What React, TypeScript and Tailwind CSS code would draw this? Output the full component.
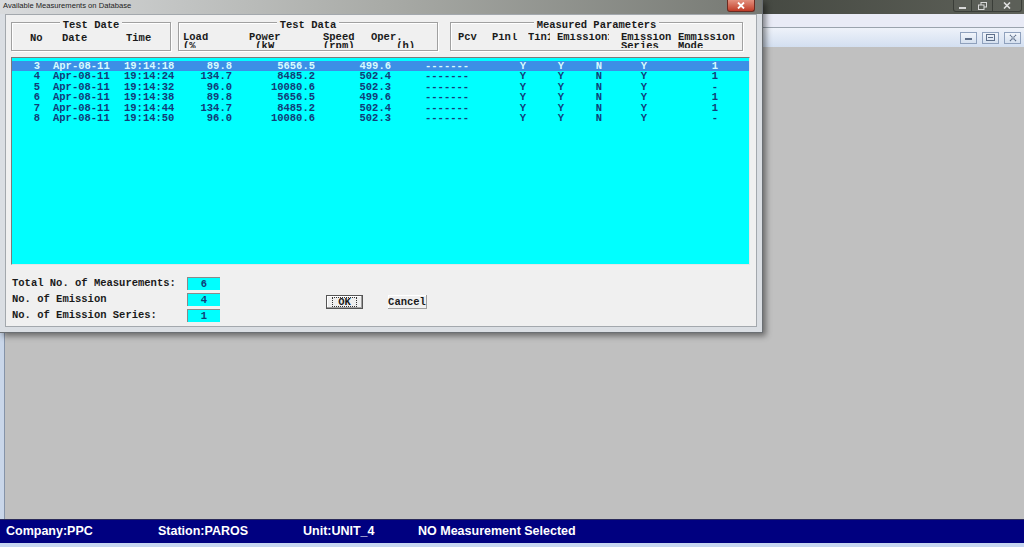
import {useState} from "react";

type Row = {
    no: number;
    date: string;
    time: string;
    load: string;
    power: string;
    oper: string;
    mode: string;
};

const rows: Row[] = [
    {no: 3, date: "Apr-08-11", time: "19:14:18", load: "89.8", power: "5656.5", oper: "499.6", mode: "1"},
    {no: 4, date: "Apr-08-11", time: "19:14:24", load: "134.7", power: "8485.2", oper: "502.4", mode: "1"},
    {no: 5, date: "Apr-08-11", time: "19:14:32", load: "96.0", power: "10080.6", oper: "502.3", mode: "-"},
    {no: 6, date: "Apr-08-11", time: "19:14:38", load: "89.8", power: "5656.5", oper: "499.6", mode: "1"},
    {no: 7, date: "Apr-08-11", time: "19:14:44", load: "134.7", power: "8485.2", oper: "502.4", mode: "1"},
    {no: 8, date: "Apr-08-11", time: "19:14:50", load: "96.0", power: "10080.6", oper: "502.3", mode: "-"},
];

function GroupBox({title, width, children}: { title: string; width: string; children: React.ReactNode }) {
    return (
        <div className={`${width} h-[29px] border border-[#a0a0a0] shadow-[inset_1px_1px_0_#ffffff,1px_1px_0_#ffffff]`}>
            <div className="flex justify-center -mt-[3px] h-[11px] leading-[11px]">
                <span className="bg-[#f0f0f0] px-[3px]">{title}</span>
            </div>
            {children}
        </div>
    );
}

function Dialog() {
    const [selected, setSelected] = useState(3);

    const contentRows = rows.map((r) => {
        const sel = r.no === selected;
        return (
            <div key={r.no} onClick={() => setSelected(r.no)}
                 className={sel
                     ? "flex h-[10.4px] leading-[10.4px] bg-[#3c8fe6] text-[#d6fbff]"
                     : "flex h-[10.4px] leading-[10.4px] text-[#123c78]"}>
                <span className="w-[28px] text-right">{r.no}</span>
                <span className="w-[13px]"/>
                <span className="w-[71px]">{r.date}</span>
                <span className="w-[60px]">{r.time}</span>
                <span className="w-[48px] text-right">{r.load}</span>
                <span className="w-[83px] text-right">{r.power}</span>
                <span className="w-[76px] text-right">{r.oper}</span>
                <span className="w-[34px]"/>
                <span className="w-[77px]">-------</span>
                <span className="w-[42px] text-center">Y</span>
                <span className="w-[34px] text-center">Y</span>
                <span className="w-[42px] text-center">N</span>
                <span className="w-[48px] text-center">Y</span>
                <span className="w-[22px]"/>
                <span className="w-[50px] text-center">{r.mode}</span>
            </div>
        );
    });

    return (
        <div className="absolute left-0 top-0 w-[763px] h-[333px] flex flex-col bg-[#dadee3] border-r border-b border-[#6b6f73] shadow-[3px_3px_6px_rgba(0,0,0,0.45)]">
            {/* title bar */}
            <div className="h-[14px] flex items-start bg-gradient-to-r from-[#d9dbdd] via-[#a9aba7] to-[#767973]">
                <span className="pl-[3px] pt-[1px] text-[7.6px] leading-[10px] text-[#222]">Available Measurements on Database</span>
                <div className="ml-auto mr-[7px] w-[28px] h-[12px] flex items-center justify-center rounded-b-[3px] border border-t-0 border-[#6b2a20] bg-gradient-to-b from-[#e3917f] to-[#c03a26]">
                    <svg width="8" height="7" viewBox="0 0 8 7">
                        <path d="M1 0.5 L7 6.5 M7 0.5 L1 6.5" stroke="#ffffff" strokeWidth="1.8"/>
                    </svg>
                </div>
            </div>

            {/* client area */}
            <div className="flex-1 mx-[5px] mb-[5px] bg-[#f0f0f0] border border-[#a3a8ad] font-['Liberation_Mono'] font-bold text-[10.5px] text-[#1a1a1a] whitespace-pre">
                <div className="flex pl-[5px] pt-[7px]">
                    <GroupBox title="Test Date" width="w-[160px]">
                        <div className="flex mt-[2px] h-[11px] leading-[11px] pl-[18px]">
                            <span className="w-[32px]">No</span>
                            <span className="w-[64px]">Date</span>
                            <span>Time</span>
                        </div>
                    </GroupBox>
                    <div className="w-[7px]"/>
                    <GroupBox title="Test Data" width="w-[260px]">
                        <div className="flex mt-[2px] h-[15px] overflow-hidden leading-[9px] pl-[4px]">
                            <span className="w-[66px]">{"Load\n(%"}</span>
                            <span className="w-[74px]">{"Power\n (kW"}</span>
                            <span className="w-[48px]">{"Speed\n(rpm)"}</span>
                            <span>{"Oper.\n    (h)"}</span>
                        </div>
                    </GroupBox>
                    <div className="w-[12px]"/>
                    <GroupBox title="Measured Parameters" width="w-[293px]">
                        <div className="flex mt-[2px] h-[15px] overflow-hidden leading-[9px] pl-[7px]">
                            <span className="w-[34px]">Pcv</span>
                            <span className="w-[36px]">Pinl</span>
                            <span className="w-[29px]"><span className="block w-[22px] overflow-hidden">Tin1</span></span>
                            <span className="w-[64px]"><span className="block w-[52px] overflow-hidden">Emission1</span></span>
                            <span className="w-[57px]">{"Emission\nSeries"}</span>
                            <span>{"Emmission\nMode"}</span>
                        </div>
                    </GroupBox>
                </div>

                {/* list */}
                <div className="ml-[5px] mt-[6px] w-[739px] h-[208px] bg-[#00ffff] border-t border-l border-[#7a7a7a] border-r border-b border-r-[#e6e6e6] border-b-[#e6e6e6] pt-[3px]">
                    {contentRows}
                </div>

                {/* totals + buttons */}
                <div className="flex mt-[12px] pl-[6px]">
                    <div className="flex flex-col gap-[3px]">
                        <div className="flex items-center h-[13px]">
                            <span className="w-[175px]">Total No. of Measurements:</span>
                            <span className="w-[33px] h-[13px] bg-[#00ffff] border-t border-l border-[#8a8a8a] text-center leading-[12px] text-[#123c78]">6</span>
                        </div>
                        <div className="flex items-center h-[13px]">
                            <span className="w-[175px]">No. of Emission</span>
                            <span className="w-[33px] h-[13px] bg-[#00ffff] border-t border-l border-[#8a8a8a] text-center leading-[12px] text-[#123c78]">4</span>
                        </div>
                        <div className="flex items-center h-[13px]">
                            <span className="w-[175px]">No. of Emission Series:</span>
                            <span className="w-[33px] h-[13px] bg-[#00ffff] border-t border-l border-[#8a8a8a] text-center leading-[12px] text-[#123c78]">1</span>
                        </div>
                    </div>
                    <div className="flex items-start mt-[18px] ml-[106px]">
                        <button className="w-[37px] h-[14px] flex items-center justify-center border border-[#555555] bg-[#efefef] shadow-[inset_-1px_-1px_0_#a0a0a0,inset_1px_1px_0_#ffffff]">
                            <span className="border border-dotted border-[#333333] px-[5px] leading-[8px]">OK</span>
                        </button>
                        <button className="ml-[25px] w-[39px] h-[14px] flex items-center justify-center bg-[#f0f0f0] border-r border-b border-[#a0a0a0] shadow-[inset_1px_1px_0_#ffffff] leading-[10px]">
                            Cancel
                        </button>
                    </div>
                </div>
            </div>
        </div>
    );
}

function App() {
    return (
        <div className="relative w-[1024px] h-[547px] overflow-hidden bg-[#c0c0c0] font-['Liberation_Sans']">
            <div className="flex flex-col h-full">
                {/* main window caption */}
                <div className="h-[14px] flex justify-end bg-gradient-to-r from-[#55594f] via-[#30342e] to-[#5e6159]">
                    <div className="flex mr-[2px]">
                        <div className="w-[19px] h-[12px] flex items-center justify-center rounded-bl-[3px] border border-t-0 border-[#3a3d38] bg-[#5b5f58]/60">
                            <svg width="7" height="6" viewBox="0 0 7 6"><rect x="0" y="4" width="7" height="2" fill="#d8d8d8"/></svg>
                        </div>
                        <div className="w-[20px] h-[12px] flex items-center justify-center border-b border-[#3a3d38] bg-[#5b5f58]/60">
                            <svg width="9" height="8" viewBox="0 0 9 8">
                                <rect x="3" y="0.5" width="5.5" height="4.5" fill="none" stroke="#d8d8d8"/>
                                <rect x="0.5" y="3" width="5.5" height="4.5" fill="#5b5f58" stroke="#d8d8d8"/>
                            </svg>
                        </div>
                        <div className="w-[30px] h-[12px] flex items-center justify-center rounded-br-[3px] border border-t-0 border-[#3a3d38] bg-[#5b5f58]/60">
                            <svg width="8" height="7" viewBox="0 0 8 7"><path d="M1 0.5 L7 6.5 M7 0.5 L1 6.5" stroke="#e0e0e0" strokeWidth="1.6"/></svg>
                        </div>
                    </div>
                </div>
                {/* menu strip */}
                <div className="h-[14px] bg-[#e9ebf6] border-b border-[#9aa3ad]"/>
                {/* MDI child bar */}
                <div className="h-[19px] flex items-center justify-end gap-[5px] pr-[3px] bg-gradient-to-b from-[#eef2fa] to-[#d3dff0]">
                    <div className="w-[17px] h-[12px] flex items-center justify-center border border-[#8fa1bd] bg-gradient-to-b from-[#f1f5fb] to-[#d5e0ef]">
                        <svg width="7" height="6" viewBox="0 0 7 6"><rect x="0" y="3" width="7" height="2" fill="#5e6f8a"/></svg>
                    </div>
                    <div className="w-[17px] h-[12px] flex items-center justify-center border border-[#8fa1bd] bg-gradient-to-b from-[#f1f5fb] to-[#d5e0ef]">
                        <svg width="9" height="7" viewBox="0 0 9 7"><rect x="0.5" y="0.5" width="8" height="6" fill="none" stroke="#5e6f8a"/><rect x="2" y="3" width="5" height="1" fill="#5e6f8a"/></svg>
                    </div>
                    <div className="w-[17px] h-[12px] flex items-center justify-center border border-[#8fa1bd] bg-gradient-to-b from-[#f1f5fb] to-[#d5e0ef]">
                        <svg width="8" height="8" viewBox="0 0 8 8"><path d="M1 1 L7 7 M7 1 L1 7" stroke="#5e6f8a" strokeWidth="1.4" strokeDasharray="1.2 0.6"/></svg>
                    </div>
                </div>
                {/* workspace */}
                <div className="flex-1 flex">
                    <div className="w-[5px] bg-[#c9d6e9] border-r border-[#8593a8]"/>
                    <div className="flex-1 bg-[#c0c0c0]"/>
                </div>
                {/* status bar */}
                <div className="h-[24px] flex items-center pl-[6px] bg-[#000080] border-t border-[#2a2a5a] text-white font-bold text-[12.5px]">
                    <span className="w-[152px]">Company:PPC</span>
                    <span className="w-[145px]">Station:PAROS</span>
                    <span className="w-[115px]">Unit:UNIT_4</span>
                    <span>NO Measurement Selected</span>
                </div>
                <div className="h-[4px] bg-[#c6d6f0]"/>
            </div>
            <Dialog/>
        </div>
    );
}

export default App
